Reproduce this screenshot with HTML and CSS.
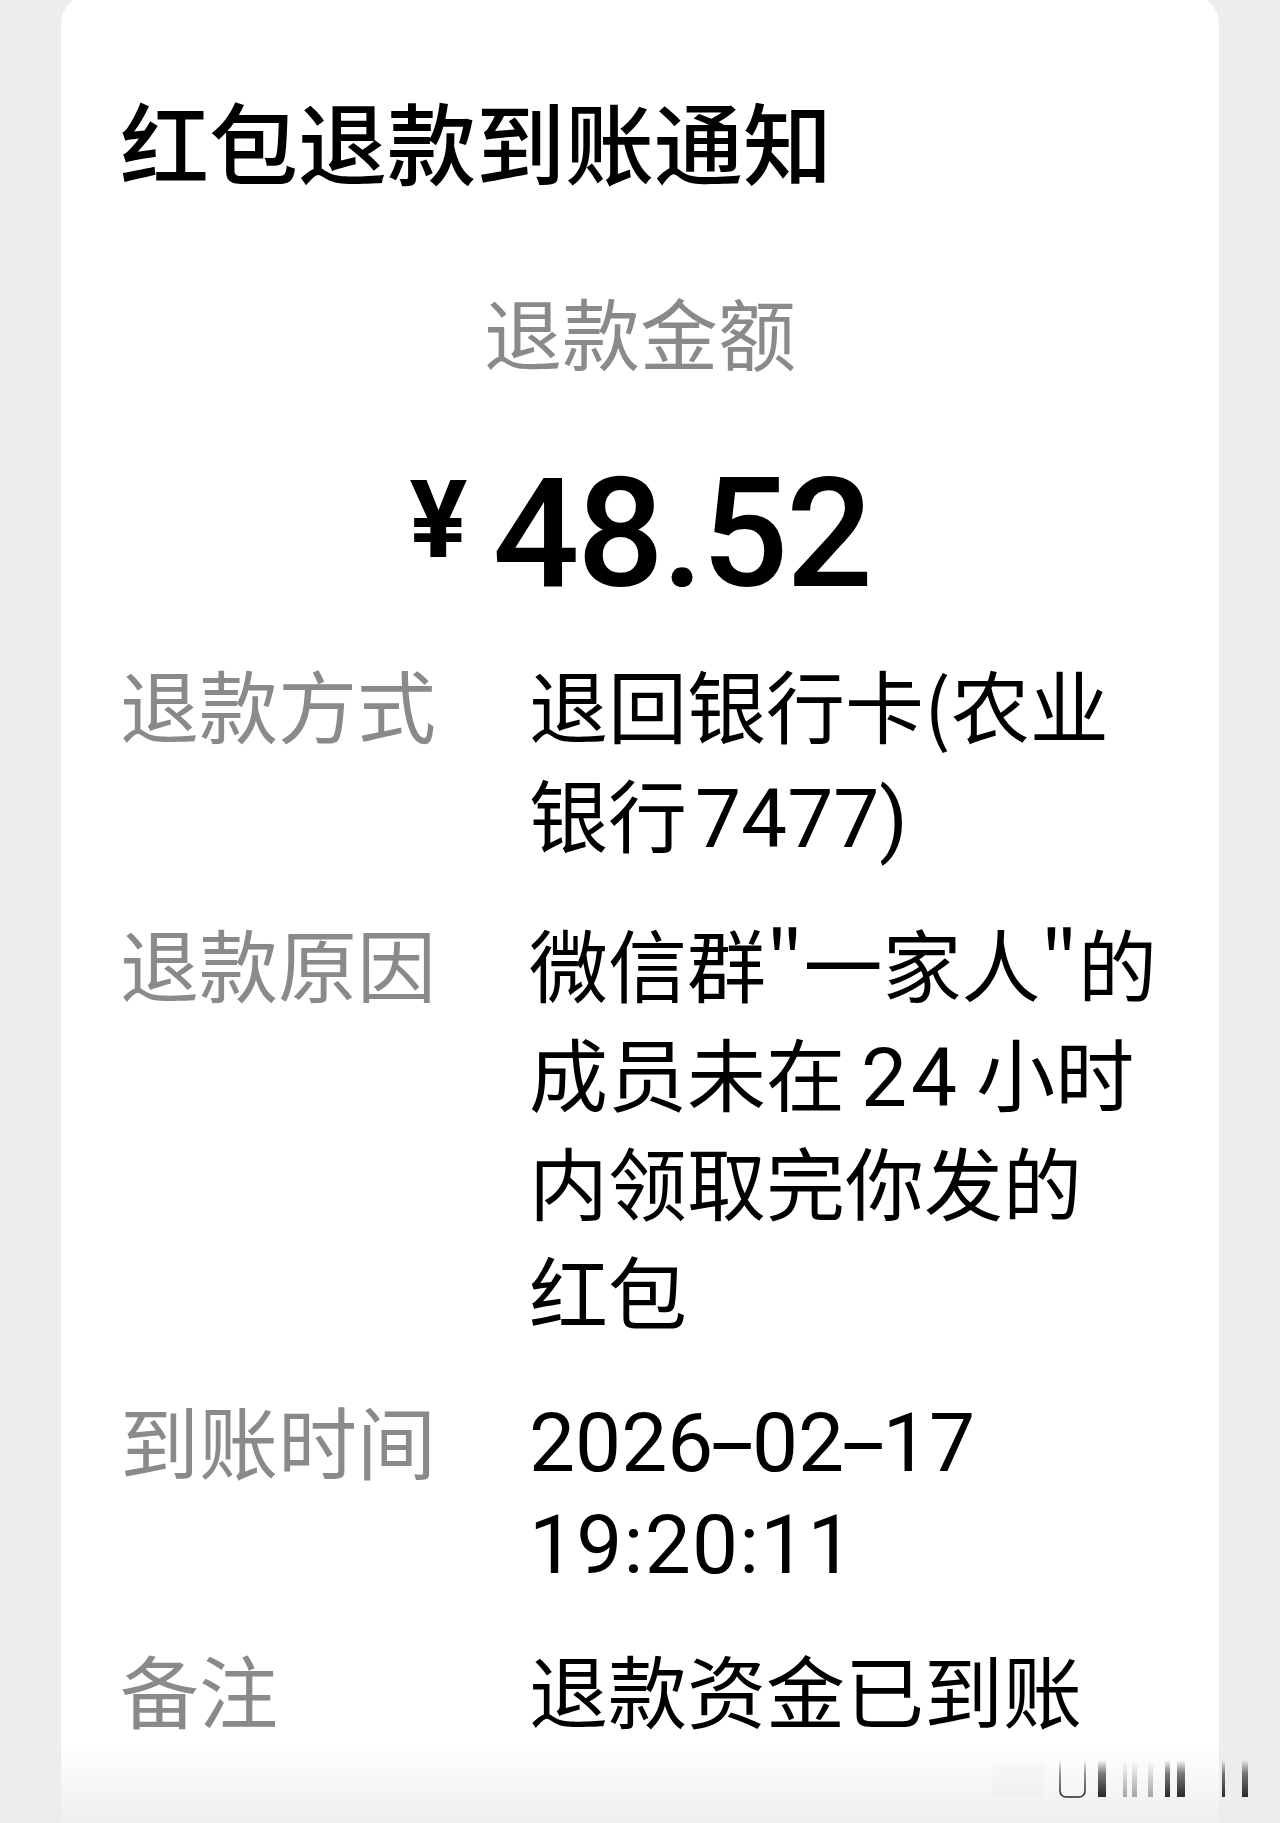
FILE: index.html
```html
<!DOCTYPE html>
<html lang="zh-CN">
<head>
<meta charset="utf-8">
<title>红包退款到账通知</title>
<link rel="stylesheet" href="styles.css">
</head>
<body>
<div class="card">
  <h1 class="title">红包退款到账通知</h1>
  <div class="amount-label">退款金额</div>
  <div class="amount"><span class="yen">¥</span><span class="big">48.52</span></div>
  <div class="rows">
    <div class="row">
      <div class="label">退款方式</div>
      <div class="value">
        <div class="line">退回银行卡(农业</div>
        <div class="line">银行<span class="num card-no">7477)</span></div>
      </div>
    </div>
    <div class="row">
      <div class="label">退款原因</div>
      <div class="value">
        <div class="line">微信群"一家人"的</div>
        <div class="line">成员未在<span class="num hours">24</span>小时</div>
        <div class="line">内领取完你发的</div>
        <div class="line">红包</div>
      </div>
    </div>
    <div class="row">
      <div class="label">到账时间</div>
      <div class="value">
        <div class="line latin"><span class="num">2026<span class="dash">-</span>02<span class="dash">-</span>17</span></div>
        <div class="line"><span class="num time">19:20:11</span></div>
      </div>
    </div>
    <div class="row">
      <div class="label">备注</div>
      <div class="value">
        <div class="line">退款资金已到账</div>
      </div>
    </div>
  </div>
</div>
<div class="fade"></div>
<svg class="mark" width="270" height="50" viewBox="0 0 270 50" aria-hidden="true">
  <defs>
    <linearGradient id="bar" x1="0" y1="0" x2="0" y2="1">
      <stop offset="0" stop-color="#111" stop-opacity="0.05"/>
      <stop offset="0.35" stop-color="#111" stop-opacity="0.55"/>
      <stop offset="1" stop-color="#111" stop-opacity="0.9"/>
    </linearGradient>
    <linearGradient id="barLight" x1="0" y1="0" x2="0" y2="1">
      <stop offset="0" stop-color="#111" stop-opacity="0"/>
      <stop offset="1" stop-color="#111" stop-opacity="0.35"/>
    </linearGradient>
  </defs>
  <rect x="8" y="8" width="50" height="34" fill="#000" fill-opacity="0.015"/>
  <path d="M75 6 V36 a6 6 0 0 0 6 6 H94 a6 6 0 0 0 6 -6 V6" fill="none" stroke="url(#bar)" stroke-width="1.6"/>
  <rect x="113" y="6" width="8" height="36" fill="url(#bar)"/>
  <rect x="138" y="6" width="4" height="36" fill="url(#barLight)"/>
  <rect x="147" y="6" width="5" height="36" fill="url(#barLight)"/>
  <rect x="163" y="6" width="5" height="36" fill="url(#barLight)"/>
  <rect x="180" y="6" width="5" height="36" fill="url(#bar)"/>
  <rect x="192" y="6" width="8" height="36" fill="url(#bar)"/>
  <rect x="237" y="6" width="3" height="36" fill="url(#bar)"/>
  <rect x="257" y="6" width="6" height="36" fill="url(#bar)"/>
</svg>
</body>
</html>
```
FILE: styles.css
```css
html, body {
  margin: 0;
  padding: 0;
}

body {
  width: 1280px;
  height: 1823px;
  overflow: hidden;
  position: relative;
  background: #ededed;
  font-family: "Noto Sans CJK SC", "Noto Sans", sans-serif;
  color: #000;
}

.card {
  margin: -6px 61px 0 61px;
  padding: 102px 59px 300px;
  background: #ffffff;
  border-radius: 30px;
}

.title {
  margin: 0;
  font-size: 89px;
  line-height: 88px;
  font-weight: 500;
  color: #000;
  white-space: nowrap;
}

.amount-label {
  margin-top: 92px;
  font-size: 78px;
  line-height: 110px;
  color: #8a8a8a;
  text-align: center;
}

.amount {
  margin-top: 71px;
  height: 153px;
  display: flex;
  justify-content: center;
  align-items: flex-start;
  font-family: Roboto, "Liberation Sans", sans-serif;
  color: #000;
}

.yen {
  font-size: 108px;
  line-height: 1;
  font-weight: 700;
  margin-top: 9px;
  margin-right: 25px;
}

.big {
  font-size: 153px;
  line-height: 1;
  font-weight: 500;
  letter-spacing: -2.5px;
}

.rows {
  margin-top: 39px;
  display: flex;
  flex-direction: column;
  gap: 41px;
}

.row {
  display: grid;
  grid-template-columns: 409px 1fr;
}

.label {
  font-size: 79px;
  line-height: 109px;
  color: #8a8a8a;
  white-space: nowrap;
}

.value {
  font-size: 79px;
  color: #000;
}

.line {
  line-height: 109px;
  white-space: nowrap;
}

.line.latin {
  line-height: 90px;
  padding-top: 7px;
}

.num {
  font-family: Roboto, "Liberation Sans", sans-serif;
  font-size: 82px;
  line-height: 1;
}

.time {
  letter-spacing: 1.2px;
}

.card-no {
  margin-left: 8px;
}

.hours {
  margin: 0 15px 0 16px;
  letter-spacing: 4px;
}

.dash {
  display: inline-block;
  margin: 0 8px;
  transform: scaleX(1.9);
}

.fade {
  position: absolute;
  left: 0;
  right: 0;
  bottom: 0;
  height: 80px;
  background: linear-gradient(to bottom, rgba(236, 236, 236, 0), rgba(236, 236, 236, 0.85));
  pointer-events: none;
}

.mark {
  position: absolute;
  left: 985px;
  top: 1755px;
}
```
